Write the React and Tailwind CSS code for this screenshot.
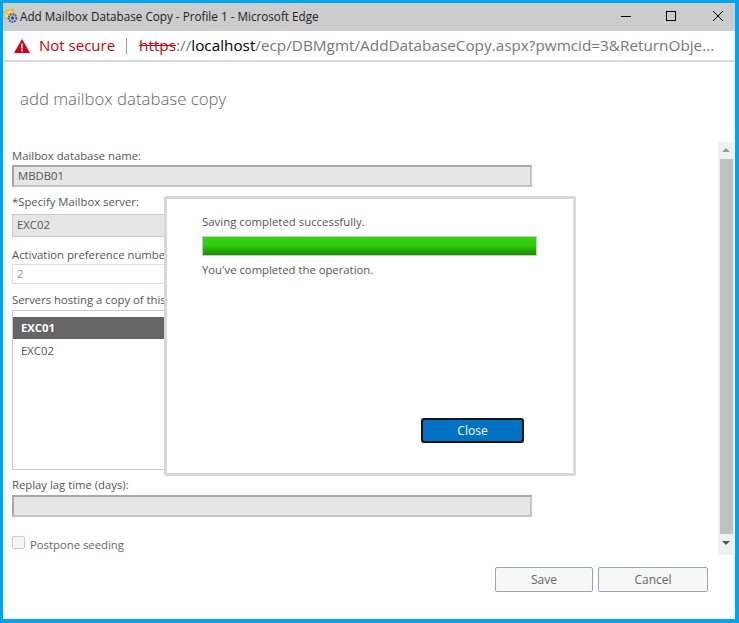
function Field({ label, value, labelClass = '', boxClass = '' }) {
  return (
    <div>
      <div className={`text-[11.3px] leading-[16px] text-[#555] whitespace-nowrap ${labelClass}`}>{label}</div>
      <div className={`w-[520px] pl-1 text-[11.3px] text-[#555] flex items-center ${boxClass}`}>{value}</div>
    </div>
  );
}

function PageIcon() {
  return (
    <svg width="17" height="18" viewBox="0 0 17 18" className="shrink-0">
      <path d="M0 4 L10 1 L12 7 L2 11 Z" fill="#f3d775" stroke="#b99b3a" strokeWidth="0.6" />
      <path d="M0 4 L7 7 L10 1" fill="none" stroke="#c9a63f" strokeWidth="0.7" />
      <circle cx="9.5" cy="10" r="3.8" fill="none" stroke="#3d55b5" strokeWidth="2.2" strokeDasharray="1.6 0.9" />
      <circle cx="9.5" cy="10" r="1.6" fill="#2e3f8f" />
    </svg>
  );
}

export default function App() {
  return (
    <div className="relative w-[739px] h-[623px] overflow-hidden bg-white border-t-[3px] border-l-[3px] border-r-[4px] border-b-[4px] border-[#00a4ef] font-['Open_Sans',sans-serif]">
      {/* title bar */}
      <div className="h-[28px] bg-[#cccccc] flex items-center">
        <PageIcon />
        <span className="text-[11.7px] text-[#222] whitespace-nowrap">Add Mailbox Database Copy - Profile 1 - Microsoft Edge</span>
        <div className="ml-auto -mt-[3px] flex items-center">
          <svg width="10" height="10" viewBox="0 0 10 10" className="mr-[35px]">
            <path d="M0 5.5 H10" stroke="#000" strokeWidth="1" fill="none" />
          </svg>
          <svg width="10" height="10" viewBox="0 0 10 10" className="mr-[37px]">
            <rect x="0.5" y="0.5" width="9" height="9" stroke="#000" strokeWidth="1" fill="none" />
          </svg>
          <svg width="10" height="10" viewBox="0 0 10 10" className="mr-[12px]">
            <path d="M0 0 L10 10 M10 0 L0 10" stroke="#000" strokeWidth="1" fill="none" />
          </svg>
        </div>
      </div>

      {/* address bar */}
      <div className="h-[31px] border-b-2 border-[#d9d9d9] flex items-center pl-[11px] text-[15px] whitespace-nowrap">
        <svg width="16" height="14" viewBox="0 0 16 14">
          <path d="M8 0 L16 14 L0 14 Z" fill="#d0021b" />
          <rect x="7.2" y="4.5" width="1.6" height="5" fill="#fff" />
          <rect x="7.2" y="10.5" width="1.6" height="1.8" fill="#fff" />
        </svg>
        <span className="ml-[9px] text-[#c8000f]">Not secure</span>
        <span className="ml-[11px] w-px h-[16px] bg-[#999]" />
        <span className="ml-[12px] text-[15.3px] text-[#c8000f] line-through">https</span>
        <span className="text-[15.3px] text-[#777]">://</span>
        <span className="text-[15.3px] text-black">localhost</span>
        <span className="text-[15.3px] text-[#777]">/ecp/DBMgmt/AddDatabaseCopy.aspx?pwmcid=3&amp;ReturnObje...</span>
      </div>

      {/* dialog body */}
      <div className="relative pl-[9px]">
        <h1 className="pl-2 pt-[25px] text-[16.8px] leading-[24px] font-light text-[#666]">add mailbox database copy</h1>

        <div className="mt-[37px] flex flex-col">
          <Field label="Mailbox database name:" value="MBDB01" boxClass="mt-[1px] h-[22px] bg-[#e6e6e6] border-2 border-t-[#a8a8a8] border-l-[#a8a8a8] border-r-[#c4c4c4] border-b-[#c4c4c4]" />
          <Field label="*Specify Mailbox server:" value="EXC02" labelClass="mt-[7px]" boxClass="mt-[4px] h-[23px] bg-[#e6e6e6] border border-[#ccc]" />
          <Field label="Activation preference number:" value={<span className="text-[#999]">2</span>} labelClass="mt-[10px]" boxClass="mt-[1px] h-[20px] border border-[#ddd]" />
          <div className="mt-[8px] text-[11.3px] leading-[16px] text-[#555] whitespace-nowrap">Servers hosting a copy of this database:</div>
          <div className="mt-[2px] w-[520px] h-[160px] border border-[#ccc] pt-[6px]">
            <div className="h-[22px] bg-[#666] pl-2 flex items-center text-[11.3px] font-bold text-white">EXC01</div>
            <div className="mt-[1px] h-[22px] pl-2 flex items-center text-[11.3px] text-[#555]">EXC02</div>
          </div>
          <Field label="Replay lag time (days):" value="" labelClass="mt-[7px]" boxClass="mt-[2px] h-[22px] bg-[#e6e6e6] border-2 border-t-[#a8a8a8] border-l-[#a8a8a8] border-r-[#c4c4c4] border-b-[#c4c4c4]" />
          <div className="mt-[19px] flex items-start gap-[5px]">
            <span className="w-[13px] h-[13px] rounded-[2px] border border-[#ccc] bg-[#f5f5f5]" />
            <span className="text-[11.3px] leading-[16px] mt-[1px] text-[#666]">Postpone seeding</span>
          </div>
        </div>

        <div className="absolute right-[27px] bottom-[-39px] flex gap-[5px]">
          <button className="w-[98px] h-[25px] bg-[#f7f7f7] border border-[#9aa5a8] rounded-[2px] text-[12px] text-[#666]">Save</button>
          <button className="w-[110px] h-[25px] bg-[#f7f7f7] border border-[#9aa5a8] rounded-[2px] text-[12px] text-[#666]">Cancel</button>
        </div>
      </div>

      {/* scrollbar */}
      <div className="absolute left-[715px] top-[139px] w-[16px] h-[413px] bg-[#f0f0f0] flex flex-col items-center">
        <div className="mt-[6px] w-0 h-0 border-x-[4px] border-x-transparent border-b-[4px] border-b-[#999]" />
        <div className="mt-[7px] w-[13px] h-[375px] bg-[#c0c0c0]" />
        <div className="mt-[7px] w-0 h-0 border-x-[4px] border-x-transparent border-t-[4px] border-t-[#555]" />
      </div>

      {/* progress modal */}
      <div className="absolute left-[161px] top-[193px] w-[412px] h-[280px] bg-white border-[3px] border-[#d8d8d8] rounded-[2px] pl-[35px] pt-[15px]">
        <div className="text-[11.4px] leading-[16px] text-[#555]">Saving completed successfully.</div>
        <div className="mt-[6px] w-[335px] h-[20px] border border-[#c8c8c8] bg-gradient-to-b from-[#33d60f] via-[#2fc90d] to-[#1a8a02]" />
        <div className="mt-[6px] text-[11.3px] leading-[16px] text-[#555]">You've completed the operation.</div>
        <button className="absolute left-[254px] top-[219px] w-[103px] h-[25px] bg-[#0072c6] border-2 border-[#111] rounded-[3px] text-[12px] text-white">Close</button>
      </div>
    </div>
  );
}
